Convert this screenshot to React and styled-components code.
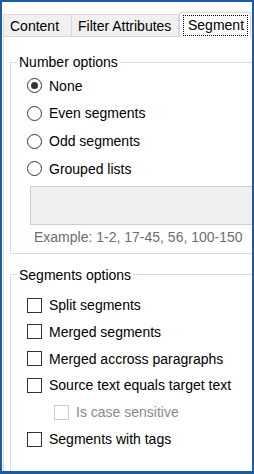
import React from 'react';
import styled, { createGlobalStyle } from 'styled-components';

const GlobalStyle = createGlobalStyle`
  body {
    margin: 0;
    font-family: "Liberation Sans", Arial, sans-serif;
    font-size: 14px;
    color: #000;
  }
`;

const numberOptions = ['None', 'Even segments', 'Odd segments', 'Grouped lists'];

const segmentOptions = [
  { label: 'Split segments' },
  { label: 'Merged segments' },
  { label: 'Merged accross paragraphs' },
  { label: 'Source text equals target text' },
  { label: 'Is case sensitive', disabled: true, nested: true },
  { label: 'Segments with tags' },
];

function App() {
  return (
    <>
      <GlobalStyle />
      <Window>
        <TabStrip>
          <Tab $width={69} $first>Content</Tab>
          <Tab $width={107}>Filter Attributes</Tab>
          <Tab $width={72} $active>
            <FocusRect>Segment</FocusRect>
          </Tab>
        </TabStrip>
        <Panel>
          <GroupBox>
            <Legend>Number options</Legend>
            <GroupBody>
              {numberOptions.map((opt, i) => (
                <OptionRow key={opt}>
                  <Radio $checked={i === 0} />
                  <span>{opt}</span>
                </OptionRow>
              ))}
              <TextArea />
              <Hint>Example: 1-2, 17-45, 56, 100-150</Hint>
            </GroupBody>
          </GroupBox>

          <GroupBox $second>
            <Legend>Segments options</Legend>
            <CheckList>
              {segmentOptions.map((opt) => (
                <CheckRow key={opt.label} $nested={opt.nested} $disabled={opt.disabled}>
                  <CheckBox $disabled={opt.disabled} />
                  <span>{opt.label}</span>
                </CheckRow>
              ))}
            </CheckList>
          </GroupBox>
        </Panel>
      </Window>
    </>
  );
}

export default App;

const Window = styled.div`
  width: 254px;
  height: 474px;
  box-sizing: border-box;
  border: 2px solid #1d5ba8;
  border-bottom-width: 3px;
  background: #fff;
  overflow: hidden;
  padding: 10px 0 0 1px;
  display: flex;
  flex-direction: column;
`;

const TabStrip = styled.div`
  display: flex;
  align-items: flex-end;
  height: 25px;
  position: relative;
  z-index: 1;
  margin-bottom: -1px;
`;

const Tab = styled.div`
  box-sizing: border-box;
  width: ${(p) => p.$width}px;
  height: ${(p) => (p.$active ? 25 : 23)}px;
  flex-shrink: 0;
  display: flex;
  align-items: center;
  padding: 0 ${(p) => (p.$active ? 3 : 6)}px;
  border: 1px solid #d9d9d9;
  border-bottom: ${(p) => (p.$active ? 'none' : '1px solid #d9d9d9')};
  border-left: ${(p) => (p.$active || p.$first ? '1px solid #d9d9d9' : 'none')};
  background: ${(p) => (p.$active ? '#fff' : '#f0f0f0')};
  white-space: nowrap;
`;

const FocusRect = styled.span`
  border: 1px dotted #000;
  padding: 1px 3px 1px 4px;
  line-height: 17px;
`;

const Panel = styled.div`
  width: 300px;
  flex: 1;
  box-sizing: border-box;
  border: 1px solid #d9d9d9;
  border-right: none;
  padding: 17px 0 0 6px;
`;

const GroupBox = styled.fieldset`
  margin: ${(p) => (p.$second ? '13px 0 0' : '0')};
  padding: 0;
  border: 1px solid #dcdcdc;
  min-width: 0;
`;

const Legend = styled.legend`
  margin-left: 6px;
  padding: 0 2px;
  line-height: 16px;
`;

const GroupBody = styled.div`
  padding: 2px 0 8px 16px;
`;

const OptionRow = styled.label`
  display: flex;
  align-items: center;
  gap: 7px;
  height: 27.67px;
`;

const Radio = styled.span`
  box-sizing: border-box;
  width: 15px;
  height: 15px;
  border-radius: 50%;
  border: 1px solid #333;
  display: flex;
  align-items: center;
  justify-content: center;

  &::after {
    content: '';
    width: 7px;
    height: 7px;
    border-radius: 50%;
    background: ${(p) => (p.$checked ? '#333' : 'transparent')};
  }
`;

const TextArea = styled.div`
  margin: 3px 0 0 3px;
  height: 39px;
  box-sizing: border-box;
  border: 1px solid #cfcfcf;
  background: #f0f0f0;
`;

const Hint = styled.div`
  margin: 4px 0 0 7px;
  line-height: 16px;
  color: #6d6d6d;
`;

const CheckList = styled.div`
  padding: 9px 0 19px 16px;
`;

const CheckRow = styled.label`
  display: flex;
  align-items: center;
  gap: 7px;
  height: 26.8px;
  padding-left: ${(p) => (p.$nested ? 27 : 0)}px;
  color: ${(p) => (p.$disabled ? '#8a8a8a' : '#000')};
`;

const CheckBox = styled.span`
  box-sizing: border-box;
  width: 15px;
  height: 15px;
  border: 1px solid ${(p) => (p.$disabled ? '#cccccc' : '#333')};
`;
